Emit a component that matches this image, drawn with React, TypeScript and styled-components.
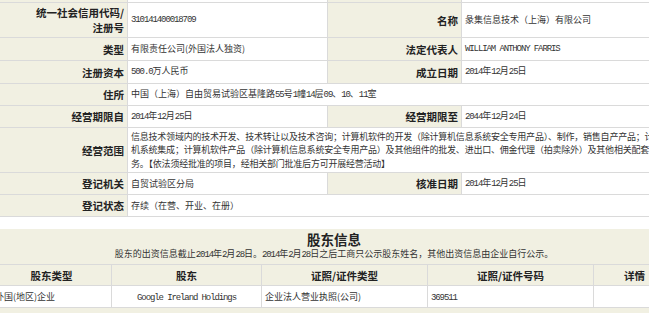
import React from 'react'
import styled, { createGlobalStyle } from 'styled-components'

const BEIGE = '#f1f0e2'
const LINE = '#dadada'

const GlobalStyle = createGlobalStyle`
  html, body {
    margin: 0;
    padding: 0;
    background: #fff;
    overflow: hidden;
  }
  body {
    font-family: "Noto Sans CJK SC", sans-serif;
    color: #333;
  }
`

const Page = styled.div`
  width: 667px;
`

const InfoTable = styled.table`
  width: 667px;
  margin-top: -19px;
  border-collapse: separate;
  border-spacing: 0;
  table-layout: fixed;
`

const Row = styled.tr<{ $h: number }>`
  & > td {
    height: ${p => p.$h}px;
  }
`

const Label = styled.td`
  box-sizing: border-box;
  padding: 0 3px 0 0;
  background: ${BEIGE};
  border-bottom: 1px solid ${LINE};
  border-right: 1px solid ${LINE};
  text-align: right;
  vertical-align: middle;
  font-size: 10.5px;
  line-height: 15px;
  font-weight: 700;
  color: #222;
`

const Value = styled.td`
  box-sizing: border-box;
  padding: 0 3px;
  background: #fff;
  border-bottom: 1px solid ${LINE};
  border-right: 1px solid ${LINE};
  text-align: left;
  vertical-align: middle;
  font-size: 9px;
  line-height: 13.5px;
  color: #333;
  white-space: nowrap;
  overflow: hidden;
`

const Para = styled(Value)`
  letter-spacing: -0.22px;
  white-space: normal;
  word-break: break-all;
  line-break: anywhere;
`

const Latin = styled.span`
  font-family: "Liberation Mono", monospace;
  font-size: 9px;
  letter-spacing: -1.1px;
`

const Share = styled.section`
  margin: 12px 0 0 -8px;
  width: 684px;
  background: ${BEIGE};
  padding-bottom: 8px;
`

const ShareHead = styled.div`
  height: 35px;
  display: flex;
  flex-direction: column;
  align-items: center;
  justify-content: center;
`

const ShareTitle = styled.div`
  font-size: 13.5px;
  line-height: 14px;
  font-weight: 700;
  color: #222;
`

const ShareNote = styled.div`
  margin-top: 2px;
  font-size: 9px;
  line-height: 11px;
  color: #333;
`

const ShareTable = styled.table`
  width: 684px;
  border-collapse: separate;
  border-spacing: 0;
  table-layout: fixed;
  border-top: 1px solid ${LINE};
`

const Th = styled.th`
  box-sizing: border-box;
  height: 21px;
  padding: 0;
  background: ${BEIGE};
  border-bottom: 1px solid ${LINE};
  border-right: 1px solid ${LINE};
  text-align: center;
  vertical-align: middle;
  font-size: 10.5px;
  font-weight: 700;
  color: #222;
`

const Td = styled.td<{ $center?: boolean }>`
  box-sizing: border-box;
  height: 22px;
  padding: 0 3px;
  background: #fff;
  border-bottom: 1px solid ${LINE};
  border-right: 1px solid ${LINE};
  text-align: ${p => (p.$center ? 'center' : 'left')};
  vertical-align: middle;
  font-size: 9px;
  color: #333;
  white-space: nowrap;
`

// ascii runs are drawn in a narrow mono face, the rest in the CJK face
const Mixed = ({ text }: { text: string }) => (
  <>
    {text.split(/([\x21-\x7e](?:[\x20-\x7e]*[\x21-\x7e])?)/).map((part, i) =>
      /^[\x20-\x7e]+$/.test(part) && part.trim() ? <Latin key={i}>{part}</Latin> : part
    )}
  </>
)

const scope =
  '信息技术领域内的技术开发、技术转让以及技术咨询；计算机软件的开发（除计算机信息系统安全专用产品）、制作，销售自产产品；计算机系统集成；计算机软件产品（除计算机信息系统安全专用产品）及其他组件的批发、进出口、佣金代理（拍卖除外）及其他相关配套业务。【依法须经批准的项目，经相关部门批准后方可开展经营活动】'

const holders = [
  { type: '外国(地区)企业', name: 'Google Ireland Holdings', cert: '企业法人营业执照(公司)', no: '369511' },
]

const App: React.FC = () => (
  <Page>
    <GlobalStyle />
    <InfoTable>
      <colgroup>
        <col style={{ width: 128 }} />
        <col style={{ width: 200 }} />
        <col style={{ width: 134 }} />
        <col />
      </colgroup>
      <tbody>
        <Row $h={22}>
          <Label />
          <Value />
          <Label />
          <Value />
        </Row>
        <Row $h={35}>
          <Label>统一社会信用代码/<br />注册号</Label>
          <Value><Mixed text="310141400018709" /></Value>
          <Label>名称</Label>
          <Value>彖集信息技术（上海）有限公司</Value>
        </Row>
        <Row $h={23}>
          <Label>类型</Label>
          <Value>有限责任公司(外国法人独资)</Value>
          <Label>法定代表人</Label>
          <Value><Mixed text="WILLIAM ANTHONY FARRIS" /></Value>
        </Row>
        <Row $h={23}>
          <Label>注册资本</Label>
          <Value><Mixed text="500.0万人民币" /></Value>
          <Label>成立日期</Label>
          <Value><Mixed text="2014年12月25日" /></Value>
        </Row>
        <Row $h={22}>
          <Label>住所</Label>
          <Value colSpan={3}><Mixed text="中国（上海）自由贸易试验区基隆路55号1幢14层09、10、11室" /></Value>
        </Row>
        <Row $h={22}>
          <Label>经营期限自</Label>
          <Value><Mixed text="2014年12月25日" /></Value>
          <Label>经营期限至</Label>
          <Value><Mixed text="2044年12月24日" /></Value>
        </Row>
        <Row $h={45}>
          <Label>经营范围</Label>
          <Para colSpan={3}>{scope}</Para>
        </Row>
        <Row $h={22}>
          <Label>登记机关</Label>
          <Value>自贸试验区分局</Value>
          <Label>核准日期</Label>
          <Value><Mixed text="2014年12月25日" /></Value>
        </Row>
        <Row $h={22}>
          <Label>登记状态</Label>
          <Value colSpan={3}>存续（在营、开业、在册）</Value>
        </Row>
      </tbody>
    </InfoTable>

    <Share>
      <ShareHead>
        <ShareTitle>股东信息</ShareTitle>
        <ShareNote>
          <Mixed text="股东的出资信息截止2014年2月28日。2014年2月28日之后工商只公示股东姓名，其他出资信息由企业自行公示。" />
        </ShareNote>
      </ShareHead>
      <ShareTable>
        <colgroup>
          <col style={{ width: 120 }} />
          <col style={{ width: 150 }} />
          <col style={{ width: 166 }} />
          <col style={{ width: 166 }} />
          <col />
        </colgroup>
        <thead>
          <tr>
            <Th>股东类型</Th>
            <Th>股东</Th>
            <Th>证照/证件类型</Th>
            <Th>证照/证件号码</Th>
            <Th>详情</Th>
          </tr>
        </thead>
        <tbody>
          {holders.map(h => (
            <tr key={h.no}>
              <Td>{h.type}</Td>
              <Td $center><Mixed text={h.name} /></Td>
              <Td>{h.cert}</Td>
              <Td><Mixed text={h.no} /></Td>
              <Td />
            </tr>
          ))}
        </tbody>
      </ShareTable>
    </Share>
  </Page>
)

export default App
